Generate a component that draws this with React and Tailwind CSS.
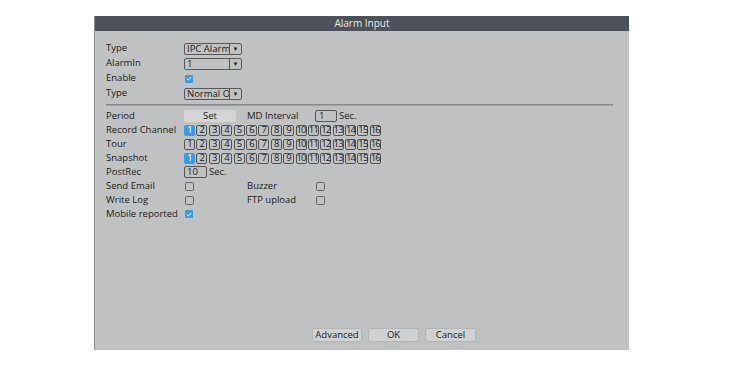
import React from 'react';

const font = { fontFamily: '"Open Sans", "Noto Sans", sans-serif' };

function Select({ value }) {
  return (
    <div className="flex h-[12px] w-[58px] items-stretch rounded-[2px] border border-[#5a5a5a] overflow-hidden">
      <div className="flex flex-1 items-center overflow-hidden whitespace-nowrap pl-[2px] text-[9.5px] leading-[10px]">{value}</div>
      <div className="flex w-[12px] items-center justify-center border-l border-[#5a5a5a] text-[6px] leading-none">▼</div>
    </div>
  );
}

function Check({ on }) {
  if (on) {
    return (
      <div className="flex h-[8px] w-[8px] items-center justify-center rounded-[1px] bg-[#3a9ae2]">
        <svg width="6" height="5" viewBox="0 0 6 5">
          <path d="M0.8 2.6 L2.4 4 L5.2 1" stroke="white" strokeWidth="1" fill="none" />
        </svg>
      </div>
    );
  }
  return <div className="h-[9px] w-[9px] rounded-[1.5px] border border-[#666]" />;
}

function Channels({ first }) {
  return (
    <div className="flex gap-[1.4px]">
      {Array.from({ length: 16 }, (_, i) => (
        <div
          key={i}
          className={
            'flex h-[11px] w-[11px] items-center justify-center rounded-[2px] text-[9.5px] leading-none tracking-[-0.8px] ' +
            (first && i === 0 ? 'bg-[#3a9ae2] text-white' : 'border border-[#555]')
          }
        >
          {i + 1}
        </div>
      ))}
    </div>
  );
}

function Row({ label, children, h = 'h-[14px]' }) {
  return (
    <div className={'flex items-center ' + h}>
      <div className="w-[78px] shrink-0 whitespace-nowrap">{label}</div>
      {children}
    </div>
  );
}

export default function App() {
  return (
    <div className="h-[366px] w-[750px] bg-white pt-[16px] pl-[94px] text-[#222]" style={font}>
      <div className="flex h-[334px] w-[535px] flex-col border-l border-[#8c8e90] bg-[#c0c1c3]">
        <div className="flex h-[15px] items-center justify-center bg-[#4b5259] text-[10px] text-[#e8e8e8]">Alarm Input</div>

        <div className="flex flex-1 flex-col pl-[11px] pr-[15px] pt-[10px] text-[9.5px]">
          <Row label="Type" h="h-[15px]"><Select value="IPC Alarm" /></Row>
          <Row label="AlarmIn" h="h-[15px]"><Select value="1" /></Row>
          <Row label="Enable" h="h-[15px]"><div className="pl-[1px]"><Check on /></div></Row>
          <Row label="Type" h="h-[15px]"><Select value="Normal Open" /></Row>

          <div className="mt-[3px] h-[2px] w-[507px] bg-gradient-to-b from-[#7c7e80] to-[#a9abad]" />

          <div className="mt-[3px]">
            <Row label="Period">
              <div className="flex h-[12px] w-[52px] items-center justify-center rounded-[2px] bg-[#d3d4d5]">Set</div>
              <div className="w-[11px]" />
              <div className="w-[68px]">MD Interval</div>
              <div className="h-[12px] w-[22px] rounded-[2px] border border-[#555] pl-[3px] leading-[10px]">1</div>
              <div className="pl-[2px]">Sec.</div>
            </Row>
            <Row label="Record Channel"><Channels first /></Row>
            <Row label="Tour"><Channels /></Row>
            <Row label="Snapshot"><Channels first /></Row>
            <Row label="PostRec">
              <div className="h-[12px] w-[23px] rounded-[2px] border border-[#555] pl-[2px] leading-[10px]">10</div>
              <div className="pl-[2px]">Sec.</div>
            </Row>
            <Row label="Send Email" h="h-[15px]">
              <div className="w-[63px] pl-[1px]"><Check /></div>
              <div className="w-[69px]">Buzzer</div>
              <Check />
            </Row>
            <Row label="Write Log" h="h-[13px]">
              <div className="w-[63px] pl-[1px]"><Check /></div>
              <div className="w-[69px]">FTP upload</div>
              <Check />
            </Row>
            <Row label="Mobile reported">
              <div className="pl-[1px]"><Check on /></div>
            </Row>
          </div>

          <div className="mt-auto mb-[8px] flex gap-[6px] pl-[206px]">
            <div className="flex h-[14px] w-[50px] items-center justify-center rounded-[2px] border border-[#b4b5b7] bg-[#d0d1d2]">Advanced</div>
            <div className="flex h-[14px] w-[51px] items-center justify-center rounded-[2px] border border-[#b4b5b7] bg-[#d0d1d2]">OK</div>
            <div className="flex h-[14px] w-[51px] items-center justify-center rounded-[2px] border border-[#b4b5b7] bg-[#d0d1d2]">Cancel</div>
          </div>
        </div>
      </div>
    </div>
  );
}
